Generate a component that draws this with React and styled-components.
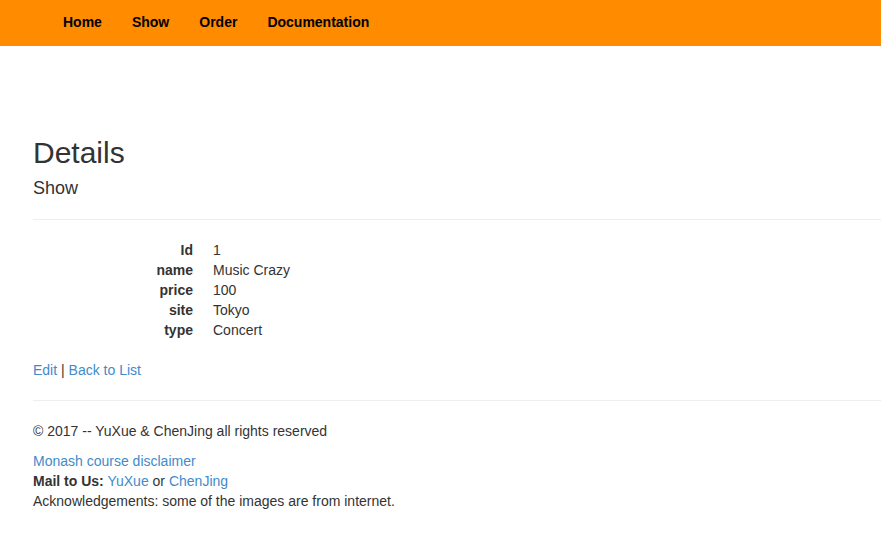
import styled, { createGlobalStyle } from 'styled-components';

const GlobalStyle = createGlobalStyle`
	html, body {
		margin: 0;
		padding: 0;
		background: #fff;
	}

	body {
		font-family: "Liberation Sans", Arial, Helvetica, sans-serif;
		font-size: 14px;
		line-height: 1.42857143;
		color: #333;
	}

	a {
		color: #428bca;
		text-decoration: none;
	}
`;

const Navbar = styled.nav`
	display: flex;
	height: 46px;
	padding-left: 48px;
	background: #ff8c00;
`;

const NavLink = styled.a`
	display: block;
	padding: 12px 15px 14px;
	height: 20px;
	font-weight: bold;
	color: #000;
`;

const Container = styled.div`
	padding: 70px 0 0 33px;
`;

const Title = styled.h2`
	margin: 20px 0 10px;
	font-size: 30px;
	font-weight: 500;
	line-height: 1.1;
`;

const Subtitle = styled.h4`
	margin: 10px 0;
	font-size: 18px;
	font-weight: 500;
	line-height: 1.1;
`;

const Rule = styled.hr`
	margin: 20px 0;
	border: 0;
	border-top: 1px solid #eee;
`;

const DetailList = styled.dl`
	display: grid;
	grid-template-columns: 160px auto;
	column-gap: 20px;
	margin: 0 0 20px;
`;

const Term = styled.dt`
	font-weight: bold;
	text-align: right;
`;

const Value = styled.dd`
	margin: 0;
`;

const Paragraph = styled.p`
	margin: 0 0 10px;
`;

const FooterLine = styled.div``;

const fields = [
	['Id', '1'],
	['name', 'Music Crazy'],
	['price', '100'],
	['site', 'Tokyo'],
	['type', 'Concert'],
];

export default function App() {
	return (
		<>
			<GlobalStyle />
			<Navbar>
				<NavLink href="#">Home</NavLink>
				<NavLink href="#">Show</NavLink>
				<NavLink href="#">Order</NavLink>
				<NavLink href="#">Documentation</NavLink>
			</Navbar>
			<Container>
				<Title>Details</Title>
				<Subtitle>Show</Subtitle>
				<Rule />
				<DetailList>
					{fields.flatMap(([label, value]) => [
						<Term key={`t-${label}`}>{label}</Term>,
						<Value key={`v-${label}`}>{value}</Value>,
					])}
				</DetailList>
				<Paragraph>
					<a href="#">Edit</a> | <a href="#">Back to List</a>
				</Paragraph>
				<Rule />
				<footer>
					<Paragraph>© 2017 -- YuXue &amp; ChenJing all rights reserved</Paragraph>
					<FooterLine>
						<a href="#">Monash course disclaimer</a>
					</FooterLine>
					<FooterLine>
						<b>Mail to Us:</b> <a href="#">YuXue</a> or <a href="#">ChenJing</a>
					</FooterLine>
					<FooterLine>Acknowledgements: some of the images are from internet.</FooterLine>
				</footer>
			</Container>
		</>
	);
}
